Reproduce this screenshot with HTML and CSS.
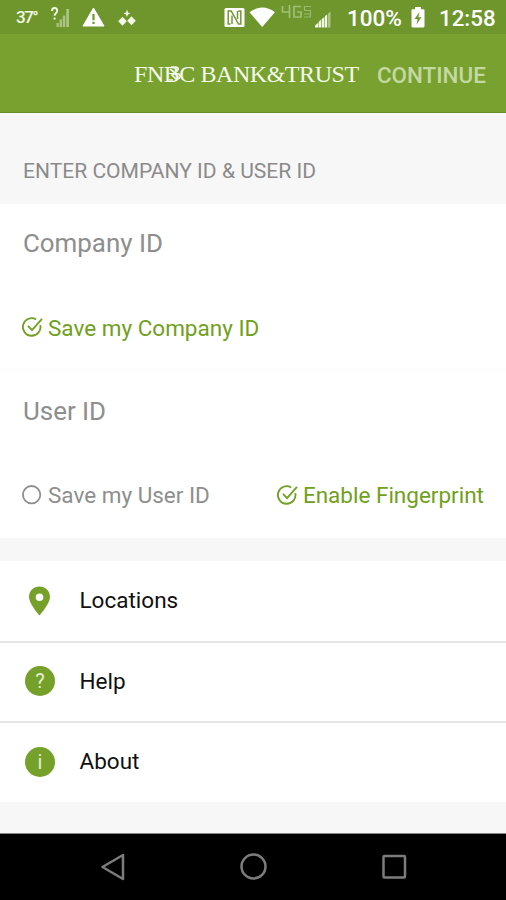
FILE: index.html
```html
<!DOCTYPE html>
<html lang="en">
<head>
<meta charset="utf-8">
<title>FNBC Bank &amp; Trust</title>
<link rel="stylesheet" href="styles.css">
</head>
<body>
<header class="status">
  <span class="temp">37°</span>
  <svg class="status-left" width="90" height="34" viewBox="50 0 90 34">
    <path d="M52 11q0-3 2.600-3t2.500 2.800q0 1.600-1.400 2.700-1.100.9-1.100 2.300M54.600 17.600v2" fill="none" stroke="#f2f8e6" stroke-width="1.900"/>
    <path d="M56.500 27v-4h2.300v4zM59.600 27v-7.500h2.400v7.500zM62.800 27V15.500h2.500V27zM66.200 27V9H69v18z" fill="#a9c581"/>
    <path d="M93.500 8 104 26H83z" fill="#fff" stroke="#fff" stroke-linejoin="round"/>
    <path d="M93.500 14v6.200M93.500 21.800v2.200" stroke="#719830" stroke-width="2.200"/>
    <path d="M127 9.500l1 3 2.500 1-2.500 1-1 2.500-1-2.500-2.500-1 2.500-1zM122.500 16.800l4.300 4.500-4.300 4.500-4.300-4.500zM131.500 16.200l4.300 4.500-4.300 4.500-4.300-4.500z" fill="#f2f8e6"/>
  </svg>
  <svg class="status-right" width="108" height="34" viewBox="224 0 108 34">
    <rect x="224.500" y="8" width="20" height="19" rx="1.500" fill="#fff"/>
    <path d="M230.500 24h-2.300V11h3l7.300 13h2.300V11h-2.500M232 15.500V24M237.500 11v8" fill="none" stroke="#719830" stroke-width="1.500"/>
    <path d="M249.500 12.200q12.700-9.300 25.400 0L262.200 27z" fill="#fff"/>
    <path d="M282.500 6v6h8M289.500 5v13M301 6.500h-7V17h7v-5h-4" fill="none" stroke="#a0bf74" stroke-width="1.700"/>
    <path d="M304 6.500h7M304 10.500h7M304 14h7M304 17h7M304.500 6v5M310.500 11v6" stroke="#98b96a" stroke-width="1.200"/>
    <path d="M315 27.500v-2l3-2.500v4.500zM318.500 27.500V22l2.700-2.500v8zM321.900 27.500V19l2.500-2v10.500zM325 27.500V16l2.200-1.500v13z" fill="#f2f8e6"/>
    <path d="M328 27.500V13.500l2.500-2v16z" fill="#a9c581"/>
  </svg>
  <span class="charge">100%</span>
  <svg class="battery" width="14" height="34" viewBox="0 0 14 34">
    <path d="M1.500 9.200H4V7h6v2.200h2.500q1 0 1 1V26q0 1.500-1.500 1.500H2Q.5 27.500.5 26V10.200q0-1 1-1z" fill="#fff"/>
    <path d="m8.500 12-5 7h3L5.500 24.500l5-7.300h-3z" fill="#719830"/>
  </svg>
  <span class="clock">12:58</span>
</header>
<div class="appbar">
  <div class="logo">FNBC BANK&amp;TRUST
    <svg class="mark" width="16" height="18" viewBox="0 0 16 18"><path d="M4 2h5q4 1 1 4L5 10l5 5M8 9q6-1 5 3-1 3-5 1M3 4l4 3M2 15h4" fill="none" stroke="#f2f8e6" stroke-width="1.700"/></svg>
  </div>
  <button class="continue">CONTINUE</button>
</div>
<main>
  <h1>ENTER COMPANY ID &amp; USER ID</h1>
  <section class="form">
    <div class="field company">Company ID</div>
    <div class="options first">
      <div class="check on"><svg width="22" height="22" viewBox="0 0 22 22"><path d="M18.300 9.100A8.800 8.800 0 1 1 14.200 3.400M6 9.800l4 4.300L20 2.800"/></svg><span class="save-company">Save my Company ID</span></div>
    </div>
    <div class="field user">User ID</div>
    <div class="options">
      <div class="check"><svg width="22" height="22" viewBox="0 0 22 22"><circle cx="9.600" cy="10.700" r="8.700"/></svg><span class="save-user">Save my User ID</span></div>
      <div class="check on"><svg width="22" height="22" viewBox="0 0 22 22"><path d="M18.300 9.100A8.800 8.800 0 1 1 14.200 3.400M6 9.800l4 4.300L20 2.800"/></svg><span class="finger">Enable Fingerprint</span></div>
    </div>
  </section>
  <nav class="menu">
    <a class="item"><svg width="30" height="30" viewBox="0 0 30 30"><path fill-rule="evenodd" d="M14.500.5C8.500.5 4 5 4 10.800 4 18 14.500 29.500 14.500 29.500S25 18 25 10.800C25 5 20.500.5 14.500.5zm0 7a3.800 3.800 0 1 1 0 7.600 3.800 3.800 0 0 1 0-7.600z" fill="#75a02a"/></svg><span class="locations">Locations</span></a>
    <a class="item"><span class="disc">?</span><span class="help">Help</span></a>
    <a class="item last"><span class="disc">i</span><span class="about">About</span></a>
  </nav>
</main>
<footer class="navbar">
  <svg width="26" height="30" viewBox="0 0 26 30"><path d="M23 3v24L2.500 15z"/></svg>
  <svg width="28" height="30" viewBox="0 0 28 30"><circle cx="13.500" cy="14.500" r="12"/></svg>
  <svg width="26" height="30" viewBox="0 0 26 30"><rect x="2.500" y="4" width="21.500" height="21.500" rx="1"/></svg>
</footer>
</body>
</html>
```
FILE: styles.css
```css
* { box-sizing: border-box; }
body {
  margin: 0;
  width: 506px;
  height: 900px;
  overflow: hidden;
  display: flex;
  flex-direction: column;
  background: #f7f7f7;
  font-family: Roboto, "Liberation Sans", sans-serif;
  white-space: nowrap;
}
svg { display: block; flex: none; }
.status {
  height: 34px;
  flex: none;
  display: flex;
  align-items: center;
  background: #6f962d;
  color: #fff;
  font-size: 22.500px;
  font-weight: 500;
}
.temp { width: 34px; margin-left: 16px; font-size: 17px; letter-spacing: -1.500px; color: #f2f8e6; }
.status-right { margin-left: 84px; }
.charge { width: 64px; margin-left: 15px; padding-top: 2px; }
.clock { margin-left: 14px; padding-top: 2px; font-size: 22.300px; }
.appbar {
  height: 79px;
  flex: none;
  display: flex;
  align-items: center;
  justify-content: flex-end;
  padding: 2px 20px 0 0;
  background: #78a12f;
  border-bottom: 1px solid #688e27;
}
.logo {
  position: relative;
  width: 226px;
  margin-right: 17px;
  color: #f5faeb;
  font: 24px/30px "Liberation Serif", serif;
  letter-spacing: -0.450px;
}
.mark { position: absolute; left: 33px; top: 6px; }
.continue {
  width: 109px;
  padding: 1px 0 0;
  border: 0;
  background: none;
  color: #c3d9a3;
  font: 500 22.400px/30px Roboto, sans-serif;
  text-align: left;
}
main { flex: 1; }
h1 {
  height: 91px;
  margin: 0;
  padding: 43px 23px 0;
  color: #8b8b8b;
  font-size: 21.050px;
  font-weight: 400;
  line-height: 29px;
}
.form { height: 334px; background: #fff; }
.field {
  height: 79px;
  display: flex;
  align-items: center;
  padding: 0 0 2px 23px;
  color: #8e8e8e;
  font-size: 25.900px;
}
.field.user { height: 80px; padding: 2px 0 0 23px; }
.options {
  height: 88px;
  display: flex;
  justify-content: space-between;
  align-items: center;
  padding: 3px 22px 0;
  font-size: 22.500px;
  color: #8e8e8e;
}
.options.first { height: 87px; padding-top: 4px; border-bottom: 1px solid #fafafa; }
.check { display: flex; align-items: center; gap: 4px; }
.check svg { fill: none; stroke: currentColor; stroke-width: 1.800; position: relative; top: -1px; }
.check span { padding-bottom: 1px; }
.on { color: #70a020; }
.menu { margin-top: 23px; height: 241px; background: #fff; }
.item {
  height: 80px;
  display: flex;
  align-items: center;
  gap: 24.500px;
  padding: 0 25px 1px;
  font-size: 22.500px;
  color: #111;
}
.item + .item { border-top: 2px solid #e5e5e5; padding-bottom: 3px; }
.item.last { padding-bottom: 1px; }
.locations, .about { padding-bottom: 2px; }
.disc {
  width: 30px;
  height: 30px;
  border-radius: 50%;
  background: #75a02a;
  color: #e5efd3;
  font-size: 20px;
  line-height: 31px;
  text-align: center;
}
.navbar {
  height: 67px;
  flex: none;
  display: flex;
  justify-content: space-between;
  align-items: center;
  padding: 0 99px 0 100px;
  background: #000;
  border-top: 1px solid #858585;
}
.navbar svg { fill: none; stroke: #7c7c7c; stroke-width: 2.500; stroke-linejoin: round; }
```
